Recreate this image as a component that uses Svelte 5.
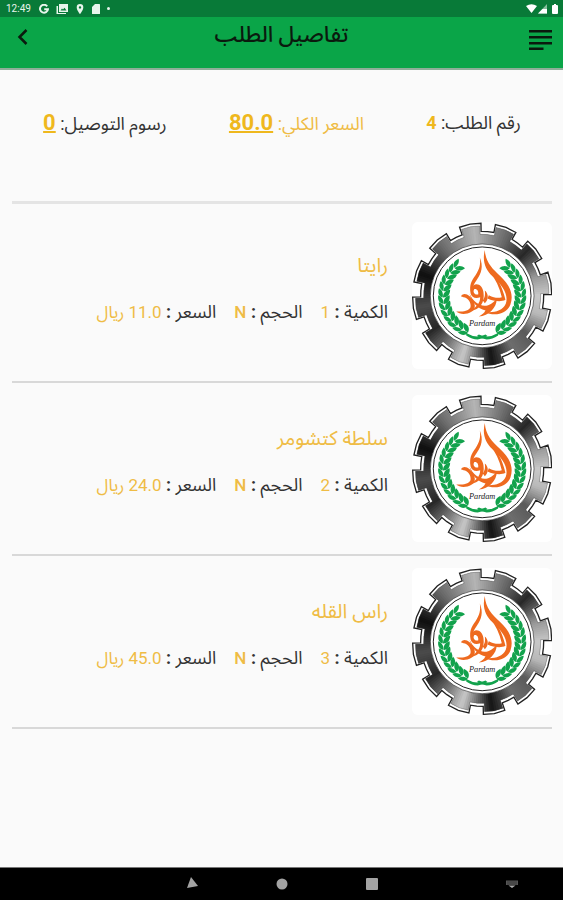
<script lang="ts">
	const summary = [
		{ label: 'رقم الطلب:', value: '4', kind: 'plain' },
		{ label: 'السعر الكلي:', value: '80.0', kind: 'total' },
		{ label: 'رسوم التوصيل:', value: '0', kind: 'fee' }
	];

	const items = [
		{ name: 'رايتا', quantity: 1, size: 'N', price: '11.0' },
		{ name: 'سلطة كتشومر', quantity: 2, size: 'N', price: '24.0' },
		{ name: 'راس القله', quantity: 3, size: 'N', price: '45.0' }
	];

	// Logo geometry: a 12-tooth gear around a round badge
	const cx = 232;
	const cy = 242;

	function point(angle: number, rx: number, ry = rx) {
		const a = (angle * Math.PI) / 180;
		return `${(cx + rx * Math.cos(a)).toFixed(1)} ${(cy - ry * Math.sin(a)).toFixed(1)}`;
	}

	function gear(rx: number, ry: number, depth: number, half: number) {
		const pts: string[] = [];
		for (let i = 0; i < 12; i++) {
			const mid = 10 + i * 30;
			pts.push(point(mid - half, rx - depth, ry - depth));
			pts.push(point(mid - half, rx, ry));
			pts.push(point(mid, rx + 1, ry + 1));
			pts.push(point(mid + half, rx, ry));
			pts.push(point(mid + half, rx - depth, ry - depth));
			pts.push(point(mid + 15, rx - depth, ry - depth));
		}
		return `M${pts.join('L')}Z`;
	}

	const outline = gear(209, 218, 24, 9);
	const body = gear(201, 210, 25, 8);

	// grey level by angle, for the brushed metal look
	const shine = [
		[0, 200], [20, 150], [45, 40], [70, 110], [97, 180], [128, 110], [160, 15], [190, 75],
		[215, 40], [235, 120], [252, 200], [278, 20], [300, 110], [320, 90], [342, 185], [360, 200]
	];

	function grey(angle: number) {
		const i = shine.findIndex((s) => s[0] > angle);
		const [a0, v0] = shine[i - 1];
		const [a1, v1] = shine[i];
		return Math.round(v0 + ((v1 - v0) * (angle - a0)) / (a1 - a0));
	}

	const wedges = Array.from({ length: 180 }, (_, i) => {
		const g = grey(i * 2 + 1);
		return {
			d: `M${cx} ${cy}L${point(i * 2, 240)}L${point(i * 2 + 4, 240)}Z`,
			fill: `rgb(${g},${g},${g})`
		};
	});

	const leaves = Array.from({ length: 13 }, (_, i) => {
		const a = 132 + i * 9.5;
		return `translate(${point(a, 117)}) rotate(${-a - 172})`;
	});
</script>

{#snippet laurel()}
	{#each leaves as t}
		<g transform={t}>
			<path d="M0 6C12 5 20 -4 18 -20C6 -17 -2 -8 0 6Z" />
			<path d="M-1 6C-13 4 -19 -5 -16 -20C-6 -16 0 -7 -1 6Z" />
		</g>
	{/each}
	<path d="M184 354Q214 372 242 358L248 363Q218 384 184 361Z" />
{/snippet}

{#snippet logo(id: string)}
	<svg class="logo" viewBox="21 20 421 442" preserveAspectRatio="none" role="img" aria-label="شعار المطعم">
		<clipPath {id}><path d={body} /></clipPath>
		<path d={outline} fill="#fff" stroke="#222" stroke-width="4" />
		<g clip-path="url(#{id})">
			{#each wedges as w}
				<path d={w.d} fill={w.fill} />
			{/each}
		</g>
		<path d={body} fill="none" stroke="#444" stroke-width="1" />
		<circle {cx} {cy} r="156" fill="#fff" stroke="#333" stroke-width="2" />
		<circle {cx} {cy} r="147" fill="#fff" stroke="#222" stroke-width="3" />
		<g fill="#12a24c">
			{@render laurel()}
			<g transform="translate(464 0) scale(-1 1)">{@render laurel()}</g>
		</g>
		<g fill="#ee6a1f">
			<path d="M240 104C242 140 262 160 286 182C314 208 328 236 317 268C307 296 270 306 238 290C262 294 292 290 303 266C313 236 290 208 264 184C240 162 232 136 240 104Z" />
			<path d="M256 172C276 184 292 212 302 254C288 262 266 258 248 250L252 240C268 248 280 250 291 246C284 216 272 192 256 172Z" />
			<path d="M225 127C236 154 230 174 216 194C206 208 202 218 205 226L198 230C192 212 200 196 212 180C224 162 228 148 225 127Z" />
			<path fill-rule="evenodd" d="M206 210C220 202 234 214 236 232C240 262 226 284 196 288C214 276 226 264 226 246C212 252 200 246 197 234C195 224 198 215 206 210ZM208 222C203 230 209 240 220 238C222 228 216 220 208 222Z" />
			<path d="M168 243C178 228 196 240 206 258C216 278 206 290 188 295C174 298 162 296 154 289C172 290 190 288 197 276C200 262 188 246 176 246Z" />
			<path d="M194 236C206 262 230 278 250 270C262 266 270 258 276 250C276 278 252 302 222 304C232 298 240 292 242 286C218 280 200 262 194 236Z" />
			<path d="M240 226C252 236 252 254 240 264L234 256C240 248 242 238 240 226Z" />
		</g>
		<text class="logo-name" x="232" y="334" text-anchor="middle">Pardam</text>
	</svg>
{/snippet}

<div class="screen">
	<div class="status-bar">
		<span class="clock">12:49</span>
		<svg width="10" height="10" viewBox="0 0 10 10" fill="none" stroke="#e8f5ec" stroke-width="2">
			<path d="M8.2 2.3A4 4 0 1 0 9 5.2H5.2" />
		</svg>
		<svg width="12" height="10" viewBox="0 0 12 10" fill="#e8f5ec">
			<path d="M3 0h9v8H3zM4.5 6.5h6L8.5 3.8 7 5.5 6 4.6zM0.5 2h1.5v7h8v1H0.5z" fill-rule="evenodd" />
		</svg>
		<svg width="10" height="10" viewBox="0 0 10 10" fill="#e8f5ec">
			<path d="M5 0a3.3 3.3 0 0 0-3.3 3.4C1.7 6 5 10 5 10s3.3-4 3.3-6.6A3.3 3.3 0 0 0 5 0zm0 2.2a1.2 1.2 0 1 1 0 2.4 1.2 1.2 0 0 1 0-2.4z" fill-rule="evenodd" />
		</svg>
		<svg width="8" height="10" viewBox="0 0 8 10" fill="#e8f5ec">
			<path d="M3 0h4.5q.5 0 .5.5v9q0 .5-.5.5h-7Q0 10 0 9.5V3z" />
		</svg>
		<span class="more"></span>
		<span class="spacer"></span>
		<svg width="32" height="10" viewBox="0 0 32 10" fill="#fff">
			<path d="M0 2Q5.5-1.5 11 2L5.5 9z" />
			<path d="M21 0v9.5h-9z" opacity=".5" />
			<path d="M21 5v4.5h-9L16.5 5z" />
			<path d="M27 1h1V0h2v1h1q1 0 1 1v7q0 1-1 1h-4q-1 0-1-1V2q0-1 1-1z" />
		</svg>
	</div>

	<header>
		<button class="icon-btn" aria-label="رجوع">
			<svg width="24" height="22" viewBox="0 0 24 22" fill="none" stroke="#0a1a0e" stroke-width="2.5">
				<path d="M15.5 4L8.5 11l7 7" />
			</svg>
		</button>
		<h1>تفاصيل الطلب</h1>
		<button class="icon-btn menu" aria-label="القائمة">
			<svg width="24" height="22" viewBox="0 0 24 22" fill="#0a1a0e">
				<path d="M1 1h23v2.5H1zM1 7h23v2.5H1zM1 13h23v2.5H1zM1 18.5h14.5V21H1z" />
			</svg>
		</button>
	</header>

	<main dir="rtl">
		<section class="summary">
			{#each summary as s}
				<p class={s.kind}>{s.label} <strong>{s.value}</strong></p>
			{/each}
		</section>

		<ul>
			{#each items as item, i}
				<li>
					{@render logo(`gear-${i}`)}
					<div class="info">
						<h2>{item.name}</h2>
						<div class="details">
							<span>الكمية <b>:</b> <em>{item.quantity}</em></span>
							<span>الحجم <b>:</b> <em class="size">{item.size}</em></span>
							<span>السعر <b>:</b> <em>{item.price} ريال</em></span>
						</div>
					</div>
				</li>
			{/each}
		</ul>
	</main>

	<nav aria-label="النظام">
		<span class="spacer"></span>
		<button aria-label="Back">
			<svg width="14" height="14" viewBox="0 0 14 14" fill="#a3a3a3"><path d="M6 0l7 9L2 11z" /></svg>
		</button>
		<button aria-label="Home">
			<svg width="14" height="14" viewBox="0 0 14 14" fill="#a3a3a3"><circle cx="7" cy="7" r="5.5" /></svg>
		</button>
		<button aria-label="Recents">
			<svg width="14" height="14" viewBox="0 0 14 14" fill="#a3a3a3"><rect x="1" y="1" width="12" height="12" rx="1" /></svg>
		</button>
		<span class="spacer">
			<button class="keyboard" aria-label="Keyboard">
				<svg width="14" height="14" viewBox="0 0 14 14">
					<path d="M1 3.5h12V8H1z" fill="#555" />
					<path d="M2.5 5h9M2.5 7h9" stroke="#222" stroke-dasharray="1 1" />
					<path d="M3.5 8.5h7L7 11z" fill="#aaa" />
				</svg>
			</button>
		</span>
	</nav>
</div>

<style>
	:global(body) {
		margin: 0;
		background: #fafafa;
	}

	.screen {
		display: flex;
		flex-direction: column;
		min-height: 100vh;
		background: #fafafa;
		color: #333;
		font-family: Roboto, 'Noto Sans Arabic', 'DejaVu Sans', sans-serif;
	}

	button {
		display: flex;
		padding: 0;
		border: 0;
		background: none;
		cursor: pointer;
	}

	h1,
	h2,
	p,
	ul {
		margin: 0;
		padding: 0;
	}

	.spacer {
		flex: 1;
	}

	.status-bar {
		display: flex;
		align-items: center;
		gap: 7px;
		height: 17px;
		padding: 0 5px 0 6px;
		background: #087a38;
		color: #e8f5ec;
	}

	.clock {
		font-size: 10px;
		margin-right: 1px;
	}

	.more {
		width: 3px;
		height: 3px;
		border-radius: 50%;
		background: #e8f5ec;
	}

	header {
		display: flex;
		align-items: flex-start;
		justify-content: space-between;
		height: 51px;
		padding: 0 11px;
		border-bottom: 2px solid #8fae99;
		background: #0aa548;
	}

	.icon-btn {
		padding-top: 9px;
	}

	.menu {
		padding-top: 12px;
	}

	h1 {
		font-size: 22px;
		font-weight: 500;
		line-height: 36px;
		color: #0a1a0e;
	}

	main {
		flex: 1;
		padding: 0 11px 0 12px;
	}

	.summary {
		display: flex;
		justify-content: space-around;
		padding: 36px 0 60px;
		border-bottom: 3px solid #e4e4e4;
		font-size: 18px;
		line-height: 34px;
	}

	strong {
		color: #efb81d;
		font-weight: 700;
		font-size: 18px;
	}

	.total {
		color: #efbc45;
	}

	.total strong,
	.fee strong {
		font-size: 22px;
		text-decoration: underline;
		text-decoration-thickness: 2px;
	}

	ul {
		padding-top: 6px;
		list-style: none;
	}

	li {
		display: flex;
		gap: 24px;
		padding: 12px 0;
		border-bottom: 2px solid #d8d8d8;
	}

	.logo {
		flex: none;
		width: 140px;
		height: 147px;
		border-radius: 6px;
		background: #fff;
	}

	.logo-name {
		font: italic 25px 'Liberation Serif', serif;
		fill: #222;
	}

	h2 {
		padding-top: 26px;
		font-size: 20px;
		font-weight: 400;
		line-height: 34px;
		color: #efbc45;
	}

	.details {
		display: flex;
		gap: 18px;
		padding-top: 13px;
		font-size: 18px;
		line-height: 34px;
		white-space: nowrap;
	}

	em {
		color: #efbc45;
		font-size: 17px;
		font-style: normal;
	}

	.size {
		font-weight: 500;
	}

	nav {
		display: flex;
		align-items: center;
		gap: 76px;
		height: 32px;
		border-top: 1px solid #777;
		background: #000;
	}

	.keyboard {
		margin: 0 44px 0 auto;
	}
</style>
